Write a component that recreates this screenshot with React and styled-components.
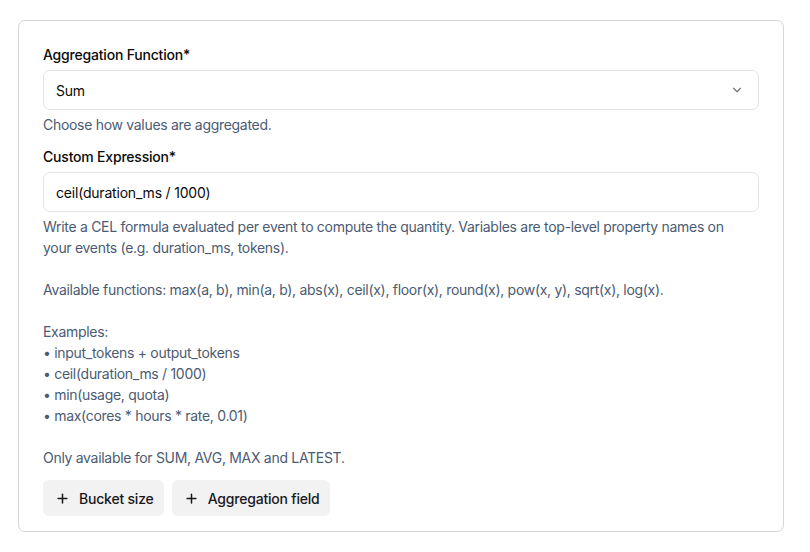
import React from "react";
import styled, { createGlobalStyle } from "styled-components";

const Global = createGlobalStyle`
  * { box-sizing: border-box; }
  body {
    margin: 0;
    background: #ffffff;
    font-family: Inter, "Noto Sans", sans-serif;
    -webkit-font-smoothing: antialiased;
  }
`;

const Page = styled.div`
  padding: 20px 26px 20px 18px;
`;

const Card = styled.div`
  border: 1px solid #d4d6dc;
  border-radius: 7px;
  padding: 24px 24px 15px 24px;
  display: flex;
  flex-direction: column;
`;

const Field = styled.div`
  display: flex;
  flex-direction: column;
  margin-bottom: ${(p) => p.$gap || 0}px;
`;

const Label = styled.label`
  font-size: 14px;
  line-height: 20px;
  font-weight: 500;
  letter-spacing: -0.2px;
  color: #0a0a0a;
  margin-bottom: 5px;
`;

const Box = styled.div`
  height: 40px;
  border: 1px solid #e4e4e7;
  border-radius: 7px;
  display: flex;
  align-items: center;
  justify-content: space-between;
  padding: 0 14px 0 12px;
  font-size: 14px;
  letter-spacing: -0.2px;
  color: #0a0a0a;
`;

const Help = styled.p`
  margin: 4px 0 0;
  font-size: 14px;
  line-height: 21px;
  letter-spacing: -0.3px;
  color: #4b5b73;
  white-space: pre-line;
`;

const Actions = styled.div`
  display: flex;
  gap: 8px;
  margin-top: 12px;
`;

const AddButton = styled.button`
  display: flex;
  align-items: center;
  gap: 9px;
  height: 36px;
  padding: 0 10px 0 12px;
  border: none;
  border-radius: 6px;
  background: #f2f2f3;
  font-family: inherit;
  font-size: 14px;
  font-weight: 500;
  letter-spacing: -0.2px;
  color: #18181b;
`;

const Chevron = () => (
  <svg width="14" height="14" viewBox="0 0 24 24" fill="none" stroke="#71717a" strokeWidth="2" strokeLinecap="round" strokeLinejoin="round">
    <path d="m6 9 6 6 6-6" />
  </svg>
);

const Plus = () => (
  <svg width="15" height="15" viewBox="0 0 24 24" fill="none" stroke="#18181b" strokeWidth="2.4" strokeLinecap="round">
    <path d="M5 12h14M12 5v14" />
  </svg>
);

const description = `Write a CEL formula evaluated per event to compute the quantity. Variables are top-level property names on
your events (e.g. duration_ms, tokens).

Available functions: max(a, b), min(a, b), abs(x), ceil(x), floor(x), round(x), pow(x, y), sqrt(x), log(x).

Examples:
• input_tokens + output_tokens
• ceil(duration_ms / 1000)
• min(usage, quota)
• max(cores * hours * rate, 0.01)

Only available for SUM, AVG, MAX and LATEST.`;

export default function App() {
  return (
    <>
      <Global />
      <Page>
        <Card>
          <Field $gap={12}>
            <Label>Aggregation Function*</Label>
            <Box>
              <span>Sum</span>
              <Chevron />
            </Box>
            <Help>Choose how values are aggregated.</Help>
          </Field>
          <Field>
            <Label>Custom Expression*</Label>
            <Box>ceil(duration_ms / 1000)</Box>
            <Help>{description}</Help>
          </Field>
          <Actions>
            <AddButton>
              <Plus />
              Bucket size
            </AddButton>
            <AddButton>
              <Plus />
              Aggregation field
            </AddButton>
          </Actions>
        </Card>
      </Page>
    </>
  );
}
